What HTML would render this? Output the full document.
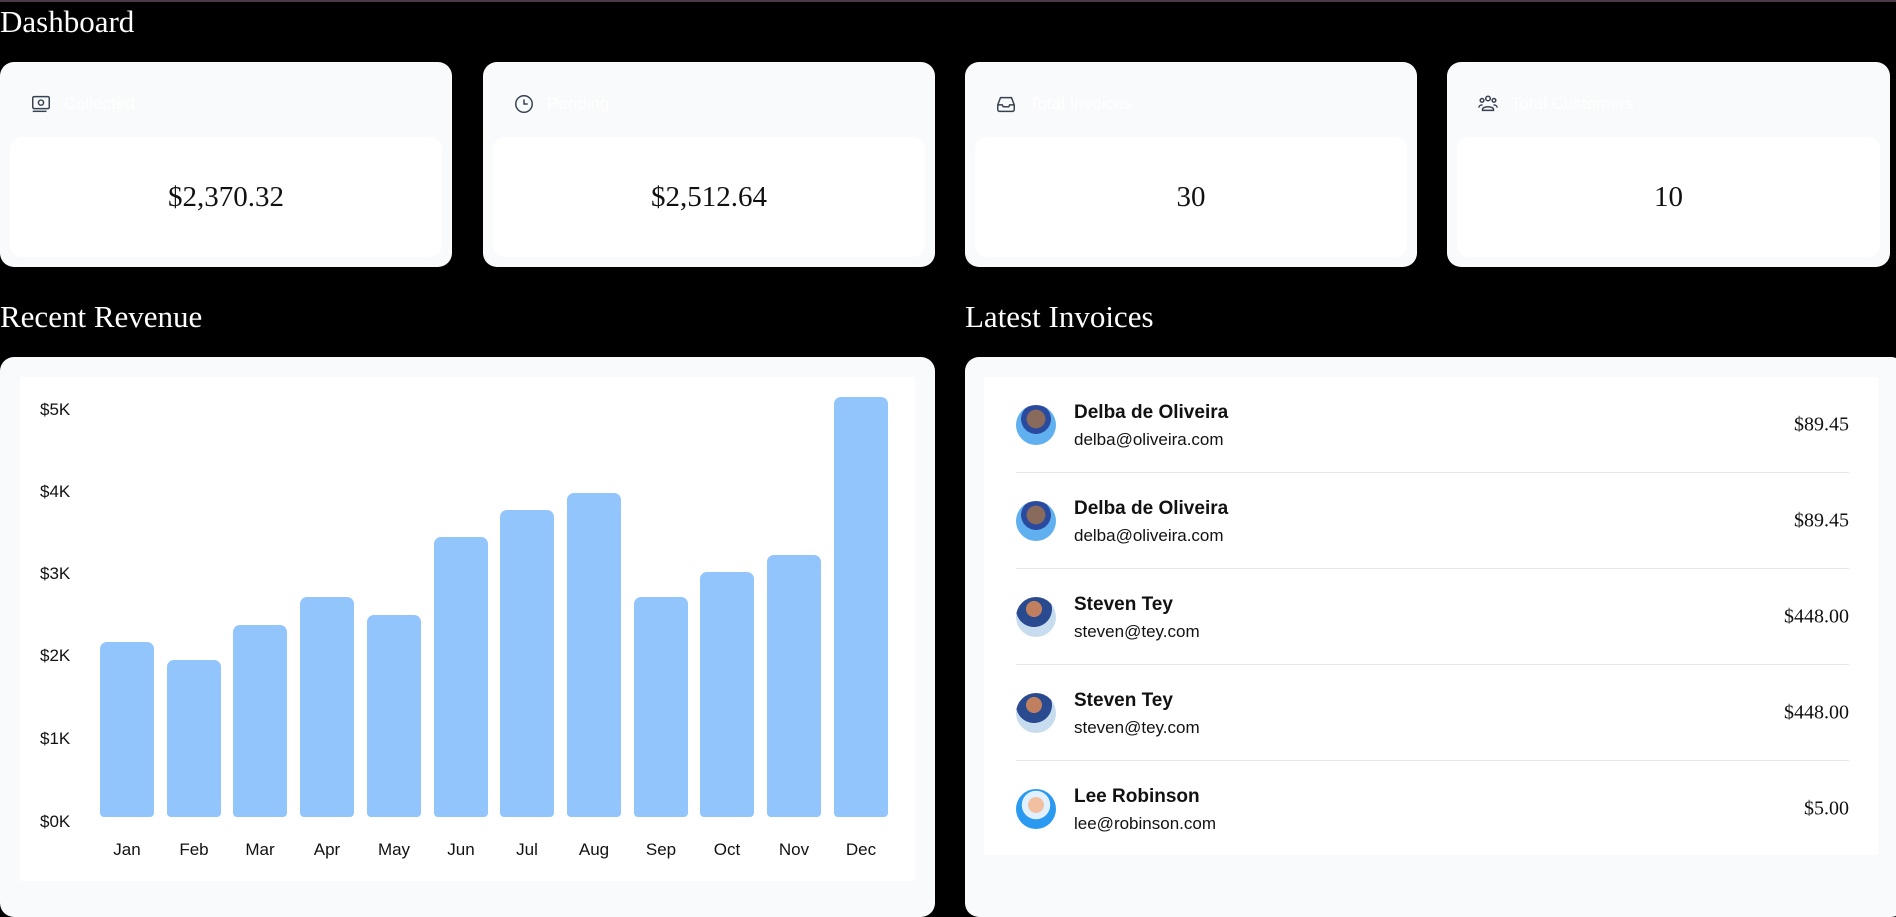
<!DOCTYPE html>
<html><head><meta charset="utf-8"><style>
*{box-sizing:border-box;margin:0;padding:0}
body{width:1896px;height:902px;background:#000;position:relative;overflow:hidden;font-family:"Liberation Sans",Arial,sans-serif}
.topline{position:absolute;left:0;top:0;width:1896px;height:2px;background:#4a3a4a}
.h{position:absolute;color:#fff;font-family:"Liberation Serif",serif;font-size:31px;line-height:1}
.card{position:absolute;top:62px;width:452px;height:205px;background:#f9fafb;border-radius:14px}
.card .lab{position:absolute;left:30px;top:31px;display:flex;align-items:center;gap:12px;color:#fff;font-size:17px}
.card .box{position:absolute;left:10px;right:10px;top:75px;height:120px;background:#fff;border-radius:12px;display:flex;align-items:center;justify-content:center;font-family:"Liberation Serif",serif;font-size:29px;color:#111}
.panel{position:absolute;top:357px;height:560px;background:#f9fafb;border-radius:14px}
.yl{position:absolute;left:40px;font-size:17px;color:#111;transform:translateY(-50%)}
.bar{position:absolute;width:54px;background:#93c5fd;border-radius:7px 7px 4px 4px;bottom:85px}
.ml{position:absolute;top:840px;width:66px;text-align:center;font-size:17px;color:#111}
.row{position:absolute;left:1016px;width:833px;height:96px}
.av{position:absolute;left:0;top:-20px;width:40px;height:40px;border-radius:50%}
.nm{position:absolute;left:58px;top:-12px;font-size:19px;font-weight:bold;color:#111;transform:translateY(-50%)}
.em{position:absolute;left:58px;top:15px;font-size:17px;color:#111;transform:translateY(-50%)}
.amt{position:absolute;right:0;top:0;transform:translateY(-50%);font-family:"Liberation Serif",serif;font-size:20px;color:#111}
.sep{position:absolute;left:0;right:0;top:47px;height:1px;background:#e5e7eb}
</style></head><body>
<div class="topline"></div>
<div class="h" style="left:0;top:6px">Dashboard</div>

<div class="card" style="left:0"><div class="lab"><svg width="22" height="22" viewBox="0 0 24 24" fill="none" stroke="#374151" stroke-width="1.6"><rect x="3" y="4" width="18" height="13" rx="1.5"/><circle cx="12" cy="10.5" r="2.8"/><path d="M3 20h15"/></svg><span>Collected</span></div><div class="box">$2,370.32</div></div>
<div class="card" style="left:483px"><div class="lab"><svg width="22" height="22" viewBox="0 0 24 24" fill="none" stroke="#374151" stroke-width="1.6"><circle cx="12" cy="12" r="9"/><path d="M12 7v5h4"/></svg><span>Pending</span></div><div class="box">$2,512.64</div></div>
<div class="card" style="left:965px"><div class="lab"><svg width="22" height="22" viewBox="0 0 24 24" fill="none" stroke="#374151" stroke-width="1.6"><path d="M3 13l3-8h12l3 8v5a2 2 0 0 1-2 2H5a2 2 0 0 1-2-2z"/><path d="M3 13h5l1 2h6l1-2h5"/></svg><span>Total Invoices</span></div><div class="box">30</div></div>
<div class="card" style="left:1447px;width:443px"><div class="lab"><svg width="22" height="22" viewBox="0 0 24 24" fill="none" stroke="#374151" stroke-width="1.6"><circle cx="12" cy="6" r="2.5"/><circle cx="5.5" cy="8" r="2"/><circle cx="18.5" cy="8" r="2"/><path d="M6 18c0-4 12-4 12 0v1H6z"/><path d="M2 16c0-2 2-3 4-3M22 16c0-2-2-3-4-3"/></svg><span>Total Customers</span></div><div class="box">10</div></div>

<div class="h" style="left:0;top:301px">Recent Revenue</div>
<div class="h" style="left:965px;top:301px">Latest Invoices</div>

<div class="panel" style="left:0;width:935px"></div>
<div style="position:absolute;left:20px;top:377px;width:895px;height:504px;background:#fff"></div>
<div class="yl" style="top:410px">$5K</div><div class="yl" style="top:492px">$4K</div><div class="yl" style="top:574px">$3K</div><div class="yl" style="top:656px">$2K</div><div class="yl" style="top:739px">$1K</div><div class="yl" style="top:822px">$0K</div>
<div class="bar" style="left:100px;top:642px"></div>
<div class="bar" style="left:167px;top:660px"></div>
<div class="bar" style="left:233px;top:625px"></div>
<div class="bar" style="left:300px;top:597px"></div>
<div class="bar" style="left:367px;top:615px"></div>
<div class="bar" style="left:434px;top:537px"></div>
<div class="bar" style="left:500px;top:510px"></div>
<div class="bar" style="left:567px;top:493px"></div>
<div class="bar" style="left:634px;top:597px"></div>
<div class="bar" style="left:700px;top:572px"></div>
<div class="bar" style="left:767px;top:555px"></div>
<div class="bar" style="left:834px;top:397px"></div>
<div class="ml" style="left:94px">Jan</div><div class="ml" style="left:161px">Feb</div><div class="ml" style="left:227px">Mar</div><div class="ml" style="left:294px">Apr</div><div class="ml" style="left:361px">May</div><div class="ml" style="left:428px">Jun</div><div class="ml" style="left:494px">Jul</div><div class="ml" style="left:561px">Aug</div><div class="ml" style="left:628px">Sep</div><div class="ml" style="left:694px">Oct</div><div class="ml" style="left:761px">Nov</div><div class="ml" style="left:828px">Dec</div>

<div class="panel" style="left:965px;width:940px"></div>
<div style="position:absolute;left:984px;top:377px;width:894px;height:478px;background:#fff"></div>

<div class="row" style="top:425px"><div class="av" style="background:radial-gradient(circle at 50% 35%,#8a6a5a 0 28%,#2a4aa0 29% 45%,#60b0f0 46%)"></div><div class="nm">Delba de Oliveira</div><div class="em">delba@oliveira.com</div><div class="amt">$89.45</div><div class="sep"></div></div>
<div class="row" style="top:521px"><div class="av" style="background:radial-gradient(circle at 50% 35%,#8a6a5a 0 28%,#2a4aa0 29% 45%,#60b0f0 46%)"></div><div class="nm">Delba de Oliveira</div><div class="em">delba@oliveira.com</div><div class="amt">$89.45</div><div class="sep"></div></div>
<div class="row" style="top:617px"><div class="av" style="background:radial-gradient(circle at 45% 30%,#c08060 0 22%,#2a4a90 23% 50%,#c8dcf0 51%)"></div><div class="nm">Steven Tey</div><div class="em">steven@tey.com</div><div class="amt">$448.00</div><div class="sep"></div></div>
<div class="row" style="top:713px"><div class="av" style="background:radial-gradient(circle at 45% 30%,#c08060 0 22%,#2a4a90 23% 50%,#c8dcf0 51%)"></div><div class="nm">Steven Tey</div><div class="em">steven@tey.com</div><div class="amt">$448.00</div><div class="sep"></div></div>
<div class="row" style="top:809px"><div class="av" style="background:radial-gradient(circle at 50% 40%,#f0c0a0 0 25%,#e0f0ff 26% 45%,#2a9af0 46%)"></div><div class="nm">Lee Robinson</div><div class="em">lee@robinson.com</div><div class="amt">$5.00</div></div>
</body></html>
